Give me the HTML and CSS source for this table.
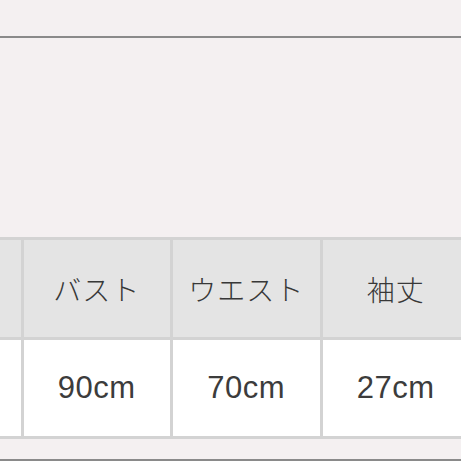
FILE: index.html
```html
<!DOCTYPE html>
<html lang="ja">
<head>
<meta charset="utf-8">
<link rel="stylesheet" href="styles.css">
</head>
<body>
<div class="page">
  <div class="top-space"></div>
  <div class="rule"></div>
  <div class="mid-space"></div>
  <table class="size-table">
    <tr class="head">
      <td>着丈</td>
      <td>バスト</td>
      <td>ウエスト</td>
      <td>袖丈</td>
    </tr>
    <tr class="data">
      <td>60cm</td>
      <td>90cm</td>
      <td>70cm</td>
      <td>27cm</td>
    </tr>
  </table>
  <div class="bottom-space"></div>
  <div class="rule"></div>
</div>
</body>
</html>
```
FILE: styles.css
```css
html, body {
  margin: 0;
  padding: 0;
  background: #f4f0f1;
  overflow: hidden;
}
.page {
  width: 461px;
  height: 461px;
  display: flex;
  flex-direction: column;
  overflow: hidden;
  font-family: "Noto Sans CJK JP", "Noto Sans", sans-serif;
  color: #383838;
}
.top-space { height: 36px; flex: none; }
.rule { height: 2px; background: #8a8a8a; flex: none; }
.mid-space { height: 199px; flex: none; }
.size-table {
  flex: none;
  align-self: flex-start;
  width: 601px;
  min-width: 601px;
  margin-left: -129px;
  border-collapse: collapse;
  table-layout: fixed;
}
.size-table td {
  border: 3px solid #d3d3d3;
  text-align: center;
  vertical-align: middle;
  padding: 0;
  white-space: nowrap;
}
.head td {
  height: 97px;
  background: #e4e4e4;
  font-size: 28px;
  font-weight: 300;
  letter-spacing: 1px;
}
.data td {
  height: 96px;
  background: #ffffff;
  font-family: "Liberation Sans", "Noto Sans", sans-serif;
  font-size: 31px;
  letter-spacing: 0.5px;
  color: #3c3c3c;
}
.bottom-space { flex: 1; }
```
